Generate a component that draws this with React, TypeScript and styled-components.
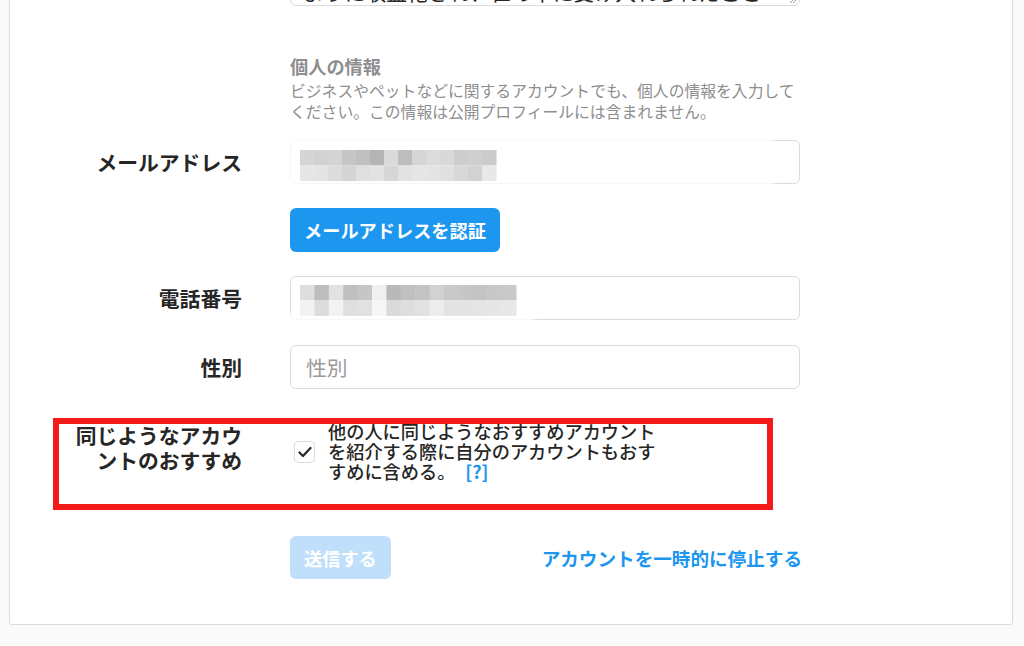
import React from 'react';
import styled, { createGlobalStyle } from 'styled-components';

const BLUE = '#1d96f0';

const Global = createGlobalStyle`
  html, body { margin: 0; padding: 0; background: #fafafa; }
  body {
    font-family: "Noto Sans CJK JP", "Noto Sans", sans-serif;
    color: #262626;
    overflow: hidden;
  }
  * { box-sizing: border-box; }
`;

const Page = styled.div`
  height: 646px;
  overflow: hidden;
  padding: 0 11px 0 9px;
`;

const Card = styled.main`
  margin-top: -105px;
  background: #fff;
  border: 1px solid #dbdbdb;
  border-radius: 0 0 3px 3px;
  padding: 30px 0 45px;
`;

const Row = styled.div<{ $mt?: number; $align?: string }>`
  position: relative;
  display: grid;
  grid-template-columns: 176px 510px;
  column-gap: 48px;
  padding-left: 56px;
  margin-top: ${(p) => p.$mt ?? 0}px;
  align-items: ${(p) => p.$align ?? 'center'};
`;

const Label = styled.label<{ $lh?: number; $pt?: number }>`
  grid-column: 1;
  text-align: right;
  font-size: 20.8px;
  font-weight: 700;
  line-height: ${(p) => p.$lh ?? 26}px;
  padding-top: ${(p) => p.$pt ?? 0}px;
  color: #262626;
`;

const Content = styled.div`
  grid-column: 2;
  position: relative;
`;

const BioBox = styled.div`
  position: relative;
  height: 80px;
  border: 1px solid #dbdbdb;
  border-radius: 6px;
  padding: 0 12px;
  display: flex;
  flex-direction: column;
  justify-content: flex-end;
  overflow: hidden;
  font-size: 20.8px;
  line-height: 26px;
  color: #262626;
  white-space: nowrap;
`;

const ResizeGrip = styled.svg`
  position: absolute;
  right: 2px;
  bottom: 1px;
`;

const SectionTitle = styled.h2`
  margin: 0;
  font-size: 18.2px;
  line-height: 24px;
  font-weight: 700;
  color: #8e8e8e;
`;

const SectionDesc = styled.p`
  margin: 2px 0 0;
  font-size: 15.8px;
  line-height: 21px;
  font-weight: 400;
  color: #8e8e8e;
`;

const TextInput = styled.input`
  display: block;
  width: 100%;
  height: 44px;
  border: 1px solid #dbdbdb;
  border-radius: 6px;
  padding: 0 15px;
  font-family: inherit;
  font-size: 20.8px;
  color: #262626;
  background: #fff;
  outline: none;
  &::placeholder { color: #9a9a9a; }
`;

const MosaicSvg = styled.svg`
  position: absolute;
  left: -6px;
  top: -6px;
  overflow: visible;
  pointer-events: none;
`;

const PrimaryButton = styled.button<{ $disabled?: boolean }>`
  justify-self: start;
  height: ${(p) => (p.$disabled ? 43 : 44)}px;
  padding: 0 14px;
  border: 0;
  border-radius: 6px;
  background: ${(p) => (p.$disabled ? '#c0dffb' : BLUE)};
  color: #fff;
  font-family: inherit;
  font-size: 18.2px;
  font-weight: 700;
  cursor: pointer;
`;

const CheckRow = styled.div`
  display: flex;
  align-items: center;
  gap: 13px;
  padding-left: 4px;
`;

const CheckBox = styled.span`
  flex: 0 0 auto;
  width: 21px;
  height: 22px;
  border: 1px solid #dbdbdb;
  border-radius: 4px;
  background: #fff;
  display: flex;
  align-items: center;
  justify-content: center;
`;

const CheckText = styled.div`
  width: 340px;
  margin-top: -1px;
  font-size: 18.2px;
  line-height: 20px;
  font-weight: 500;
  color: #262626;
`;

const Help = styled.a`
  margin-left: 10px;
  color: ${BLUE};
  font-weight: 700;
  text-decoration: none;
`;

const Highlight = styled.div`
  position: absolute;
  left: 43px;
  top: -4px;
  width: 720px;
  height: 92px;
  border: 6px solid #f41a1a;
  pointer-events: none;
`;

const Actions = styled.div`
  grid-column: 2;
  display: flex;
  justify-content: space-between;
  align-items: center;
`;

const TextLink = styled.a`
  color: ${BLUE};
  font-size: 18.6px;
  font-weight: 700;
  text-decoration: none;
  margin-right: -2px;
`;

type MosaicProps = {
  top: string[];
  bottom: string[];
  x: number;
  y: number;
  cw: number;
  ch: number;
  veil: { x: number; y: number; w: number; h: number };
};

function Mosaic({ top, bottom, x, y, cw, ch, veil }: MosaicProps) {
  const id = React.useId().replace(/:/g, '');
  return (
    <MosaicSvg width="530" height="60" viewBox="0 0 530 60">
      <defs>
        <filter id={`b${id}`} x="-20%" y="-50%" width="140%" height="200%">
          <feGaussianBlur stdDeviation="2.5" />
        </filter>
      </defs>
      <rect
        x={veil.x}
        y={veil.y}
        width={veil.w}
        height={veil.h}
        fill="#fff"
        opacity="0.8"
        filter={`url(#b${id})`}
      />
      {top.map((c, i) => (
        <rect key={`t${i}`} x={x + i * cw} y={y} width={cw + 0.5} height={ch} fill={c} />
      ))}
      {bottom.map((c, i) => (
        <rect key={`b${i}`} x={x + i * cw} y={y + ch} width={cw + 0.5} height={ch} fill={c} />
      ))}
    </MosaicSvg>
  );
}

const emailTop = ['#d5d5d5', '#d2d2d2', '#d4d4d4', '#c6c6c6', '#c0c0c0', '#b4b4b4', '#dadada', '#bdbdbd', '#d6d6d6', '#dcdcdc', '#d9d9d9', '#cdcdcd', '#cfcfcf', '#cbcbcb'];
const emailBottom = ['#e6e6e6', '#e4e4e4', '#dcdcdc', '#d4d4d4', '#dfdfdf', '#e2e2e2', '#d6d6d6', '#e2e2e2', '#e6e6e6', '#e4e4e4', '#e0e0e0', '#d8d8d8', '#d2d2d2', '#e8e8e8'];
const phoneTop = ['#dedede', '#bdbdbd', '#e2e2e2', '#c0c0c0', '#c6c6c6', '#f0f0f0', '#b9b9b9', '#c0c0c0', '#c4c4c4', '#d2d2d2', '#c9c9c9', '#c6c6c6', '#c4c4c4', '#c8c8c8', '#c9c9c9'];
const phoneBottom = ['#f2f2f2', '#dcdcdc', '#f3f3f3', '#dfdfdf', '#e1e1e1', '#f6f6f6', '#dadada', '#dedede', '#e2e2e2', '#ededed', '#e3e3e3', '#e4e4e4', '#e5e5e5', '#e6e6e6', '#e8e8e8'];

export default function App() {
  return (
    <>
      <Global />
      <Page>
        <Card>
          <Row>
            <Content>
              <BioBox>
                <div>ように収益化され、世の中に受け入れられたこと</div>
                <ResizeGrip width="8" height="8" viewBox="0 0 8 8">
                  <path d="M7 1 L1 7 M7 4 L4 7" stroke="#9a9a9a" strokeWidth="1" />
                </ResizeGrip>
              </BioBox>
            </Content>
          </Row>

          <Row $mt={48}>
            <Content>
              <SectionTitle>個人の情報</SectionTitle>
              <SectionDesc>
                ビジネスやペットなどに関するアカウントでも、個人の情報を入力してください。この情報は公開プロフィールには含まれません。
              </SectionDesc>
            </Content>
          </Row>

          <Row $mt={18}>
            <Label>メールアドレス</Label>
            <Content>
              <TextInput readOnly aria-label="メールアドレス" />
              <Mosaic
                top={emailTop}
                bottom={emailBottom}
                x={16}
                y={16}
                cw={14}
                ch={15.5}
                veil={{ x: 0, y: 2, w: 490, h: 54 }}
              />
            </Content>
          </Row>

          <Row $mt={24}>
            <Content>
              <PrimaryButton type="button">メールアドレスを認証</PrimaryButton>
            </Content>
          </Row>

          <Row $mt={24}>
            <Label>電話番号</Label>
            <Content>
              <TextInput readOnly aria-label="電話番号" />
              <Mosaic
                top={phoneTop}
                bottom={phoneBottom}
                x={16}
                y={15}
                cw={14.4}
                ch={15.5}
                veil={{ x: 0, y: 44, w: 250, h: 14 }}
              />
            </Content>
          </Row>

          <Row $mt={25}>
            <Label>性別</Label>
            <Content>
              <TextInput placeholder="性別" aria-label="性別" />
            </Content>
          </Row>

          <Row $mt={33} $align="start">
            <Label $lh={25} $pt={1}>同じようなアカウントのおすすめ</Label>
            <Content>
              <CheckRow>
                <CheckBox>
                  <svg width="14" height="12" viewBox="0 0 14 12">
                    <path d="M1.5 6.5 L5 10 L12.5 2" fill="none" stroke="#262626" strokeWidth="2.2" strokeLinecap="round" strokeLinejoin="round" />
                  </svg>
                </CheckBox>
                <CheckText>
                  他の人に同じようなおすすめアカウントを紹介する際に自分のアカウントもおすすめに含める。
                  <Help href="#">[?]</Help>
                </CheckText>
              </CheckRow>
            </Content>
            <Highlight />
          </Row>

          <Row $mt={55}>
            <Actions>
              <PrimaryButton type="button" $disabled>送信する</PrimaryButton>
              <TextLink href="#">アカウントを一時的に停止する</TextLink>
            </Actions>
          </Row>
        </Card>
      </Page>
    </>
  );
}
